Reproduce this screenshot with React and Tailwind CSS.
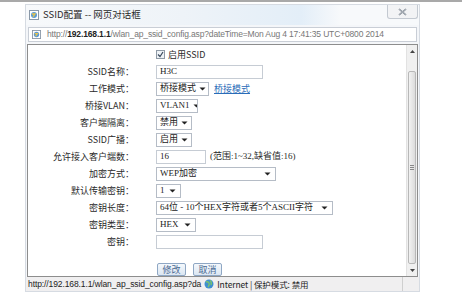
import React from 'react'

const cjk = { fontFamily: '"Noto Sans CJK SC", "Noto Sans", sans-serif' }
const serif = { fontFamily: '"Liberation Serif", "Noto Sans CJK SC", serif' }
const ui = { fontFamily: '"Liberation Sans", "Noto Sans CJK SC", sans-serif' }

function Arrow() {
  return (
    <svg width="7" height="4" viewBox="0 0 7 4" className="shrink-0">
      <path d="M0.5 0.5 L6.5 0.5 L3.5 3.5 Z" fill="#222" />
    </svg>
  )
}

function Select({ width, children }) {
  return (
    <div
      className="flex h-[14px] items-center justify-between gap-[3px] overflow-hidden border border-[#b5bcc6] bg-white pl-[3px] pr-[4px] text-[9px] leading-none text-[#222]"
      style={{ width, ...serif }}
    >
      <span className="whitespace-nowrap">{children}</span>
      <Arrow />
    </div>
  )
}

function Input({ width, children }) {
  return (
    <div
      className="flex h-[14px] items-center border border-[#c6ccd4] bg-white px-[3px] text-[9px] leading-none text-[#222]"
      style={{ width, ...serif }}
    >
      {children}
    </div>
  )
}

function Row({ label, children }) {
  return (
    <div className="flex h-[17px] items-center">
      <div className="w-[106px] shrink-0 text-right text-[9px] leading-none text-[#2a2a2a]" style={cjk}>
        {label}
      </div>
      <div className="ml-[22px] flex items-center gap-[4px]">{children}</div>
    </div>
  )
}

function PageIcon({ size }) {
  return (
    <svg width={size} height={size} viewBox="0 0 10 10">
      <rect x="0.5" y="0.5" width="9" height="9" fill="#fff" stroke="#8a98a8" />
      <circle cx="5" cy="5" r="3" fill="#5a9ad6" />
      <path d="M3 4 L6 4 L4 7" stroke="#e9c44a" strokeWidth="1.3" fill="none" />
    </svg>
  )
}

export default function App() {
  return (
    <div className="relative h-[295px] w-[462px] overflow-hidden border-t-2 border-[#a9a9a9] bg-white">
      <div className="ml-[25px] mt-[2px] w-[395px] border border-[#d6dbe2] bg-[#f4f6f9]">
        {/* title bar */}
        <div className="flex h-[20px] items-center bg-[linear-gradient(90deg,_#f7f9fb_0%,_#eef3f8_40%,_#e3eef8_70%,_#f7f9fb_80%)] pl-[3px]">
          <div className="mr-[4px] flex">
            <PageIcon size={10} />
          </div>
          <span className="text-[9.5px] leading-none text-[#2a2a2a]" style={cjk}>
            SSID配置 -- 网页对话框
          </span>
          <div className="ml-auto mr-[1px] flex h-[14px] w-[31px] items-center justify-center self-start rounded-b-[3px] border border-t-0 border-[#c3c9d1] bg-[#f2f3f5]">
            <svg width="9" height="8" viewBox="0 0 9 8">
              <path d="M1 1 L8 7 M8 1 L1 7" stroke="#707a86" strokeWidth="1.6" />
              <path d="M1 1 L8 7 M8 1 L1 7" stroke="#e8ebee" strokeWidth="0.5" />
            </svg>
          </div>
        </div>

        {/* address bar */}
        <div className="mx-[2px] mt-[2px] flex h-[15px] items-center overflow-hidden border border-[#c9ced6] bg-white pl-[3px]">
          <div className="mr-[6px] flex shrink-0">
            <PageIcon size={9} />
          </div>
          <span className="whitespace-nowrap text-[8.5px] leading-none tracking-[-0.15px] text-[#777]" style={ui}>
            http://<span className="font-bold text-[#222]">192.168.1.1</span>/wlan_ap_ssid_config.asp?dateTime=Mon Aug 4 17:41:35 UTC+0800 2014
          </span>
        </div>

        {/* content */}
        <div className="mx-[1px] mt-[2px] flex h-[233px] border border-[#8d8d8d] bg-white">
          <div className="flex-1 pt-[1px]" style={cjk}>
            <div className="flex h-[17px] items-center pl-[128px]">
              <div className="flex h-[9px] w-[9px] items-center justify-center border border-[#8f9aa6] bg-[#eef2f6]">
                <svg width="7" height="7" viewBox="0 0 7 7">
                  <path d="M1 3.5 L3 5.5 L6 1" stroke="#3a4a5e" strokeWidth="1.2" fill="none" />
                </svg>
              </div>
              <span className="ml-[3px] text-[9px] leading-none text-[#2a2a2a]">启用SSID</span>
            </div>

            <Row label="SSID名称：">
              <Input width="107px">H3C</Input>
            </Row>
            <Row label="工作模式：">
              <Select width="53px">桥接模式</Select>
              <span className="ml-[1px] text-[9px] leading-none text-[#2a6cb8] underline">桥接模式</span>
            </Row>
            <Row label="桥接VLAN：">
              <Select width="42px">VLAN1</Select>
            </Row>
            <Row label="客户端隔离：">
              <Select width="36px">禁用</Select>
            </Row>
            <Row label="SSID广播：">
              <Select width="36px">启用</Select>
            </Row>
            <Row label="允许接入客户端数：">
              <Input width="50px">16</Input>
              <span className="whitespace-nowrap text-[9px] leading-none text-[#2a2a2a]" style={serif}>(范围:1~32,缺省值:16)</span>
            </Row>
            <Row label="加密方式：">
              <Select width="120px">WEP加密</Select>
            </Row>
            <Row label="默认传输密钥：">
              <Select width="25px">1</Select>
            </Row>
            <Row label="密钥长度：">
              <Select width="177px">64位 - 10个HEX字符或者5个ASCII字符</Select>
            </Row>
            <Row label="密钥类型：">
              <Select width="40px">HEX</Select>
            </Row>
            <Row label="密钥：">
              <Input width="107px" />
            </Row>

            <div className="mt-[13px] flex gap-[7px] pl-[129px]">
              <div className="flex h-[13px] w-[29px] items-center justify-center rounded-[2px] border border-[#8fa7c4] bg-[linear-gradient(180deg,_#f4f8fc,_#dbe6f2)] text-[9px] leading-none text-[#4b6a92]">
                修改
              </div>
              <div className="flex h-[13px] w-[29px] items-center justify-center rounded-[2px] border border-[#8fa7c4] bg-[linear-gradient(180deg,_#f4f8fc,_#dbe6f2)] text-[9px] leading-none text-[#4b6a92]">
                取消
              </div>
            </div>
          </div>

          {/* scrollbar */}
          <div className="flex w-[11px] flex-col border-l border-[#e2e2e2] bg-[#f0f0f0]">
            <div className="flex h-[12px] items-center justify-center">
              <svg width="5" height="3" viewBox="0 0 5 3"><path d="M0 3 L2.5 0 L5 3 Z" fill="#444" /></svg>
            </div>
            <div className="mx-[1px] mt-[14px] flex h-[193px] items-center justify-center rounded-[2px] border border-[#b8b8b8] bg-[linear-gradient(90deg,_#f2f2f2,_#dcdcdc)]">
              <div className="flex flex-col gap-[1px]">
                <div className="h-px w-[4px] bg-[#888]" />
                <div className="h-px w-[4px] bg-[#888]" />
                <div className="h-px w-[4px] bg-[#888]" />
              </div>
            </div>
            <div className="mt-auto flex h-[12px] items-center justify-center">
              <svg width="5" height="3" viewBox="0 0 5 3"><path d="M0 0 L2.5 3 L5 0 Z" fill="#444" /></svg>
            </div>
          </div>
        </div>

        {/* status bar */}
        <div className="flex h-[14px] items-center bg-[#f0eff0] pl-[2px] text-[8.5px] leading-none tracking-[-0.1px] text-[#222]">
          <span className="whitespace-nowrap" style={ui}>
            http://192.168.1.1/wlan_ap_ssid_config.asp?da
          </span>
          <svg width="10" height="10" viewBox="0 0 10 10" className="ml-[3px] mr-[3px] shrink-0">
            <circle cx="5" cy="5" r="4.5" fill="#3f8fd0" />
            <path d="M2 3 Q4 2 5 4 Q6 6 4 8 M6 1.5 Q8 3 7 6" stroke="#7cc46a" strokeWidth="1.4" fill="none" />
          </svg>
          <span className="whitespace-nowrap" style={cjk}>Internet | 保护模式: 禁用</span>
          <div className="ml-auto h-full w-[17px] border-l border-[#cfcfcf]" />
        </div>
      </div>
    </div>
  )
}
